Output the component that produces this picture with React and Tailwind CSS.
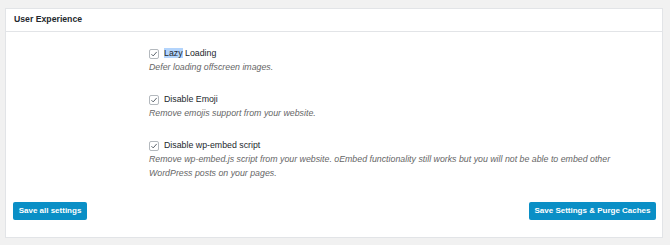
import React from "react";

function Check() {
  return (
    <span className="flex h-[10px] w-[10px] shrink-0 items-center justify-center rounded-[2px] border border-[#b4b9be] bg-white">
      <svg viewBox="0 0 10 10" className="h-[8px] w-[8px]">
        <path d="M1.8 5.2 L4 7.4 L8.4 2.4" fill="none" stroke="#555d66" strokeWidth="1.2" />
      </svg>
    </span>
  );
}

function Option({ label, children }) {
  return (
    <div className="flex flex-col">
      <div className="flex h-[12px] items-center gap-[5px] text-[8.8px] text-[#23282d]">
        <Check />
        <span>{label}</span>
      </div>
      <p className="mt-[1px] text-[8.8px] italic leading-[13.5px] text-[#666]">{children}</p>
    </div>
  );
}

export default function App() {
  return (
    <div className="h-[245px] w-[670px] bg-[#f1f1f1] pl-[5px] pr-[7px] pt-[8px] font-['Liberation_Sans',sans-serif]">
      <div className="h-[230px] border border-[#e2e4e7] bg-white">
        <div className="flex h-[23px] items-center border-b border-[#e2e4e7] px-[8px] text-[8.7px] font-bold text-[#23282d]">
          User Experience
        </div>
        <div className="flex flex-col gap-[19.5px] pl-[143px] pt-[16px]">
          <Option
            label={
              <>
                <span className="bg-[#b3d4fc]">Lazy</span> Loading
              </>
            }
          >
            Defer loading offscreen images.
          </Option>
          <Option label="Disable Emoji">Remove emojis support from your website.</Option>
          <Option label="Disable wp-embed script">
            Remove wp-embed.js script from your website. oEmbed functionality still works but you will not be able to embed other
            <br />
            WordPress posts on your pages.
          </Option>
        </div>
        <div className="mt-[22px] flex items-center justify-between pl-[7px] pr-[6px]">
          <button className="h-[18px] w-[74px] rounded-[2px] bg-[#0a8fc6] text-[8px] font-bold text-white">
            Save all settings
          </button>
          <button className="h-[18px] w-[127px] rounded-[2px] bg-[#0a8fc6] text-[8px] font-bold text-white">
            Save Settings &amp; Purge Caches
          </button>
        </div>
      </div>
    </div>
  );
}
